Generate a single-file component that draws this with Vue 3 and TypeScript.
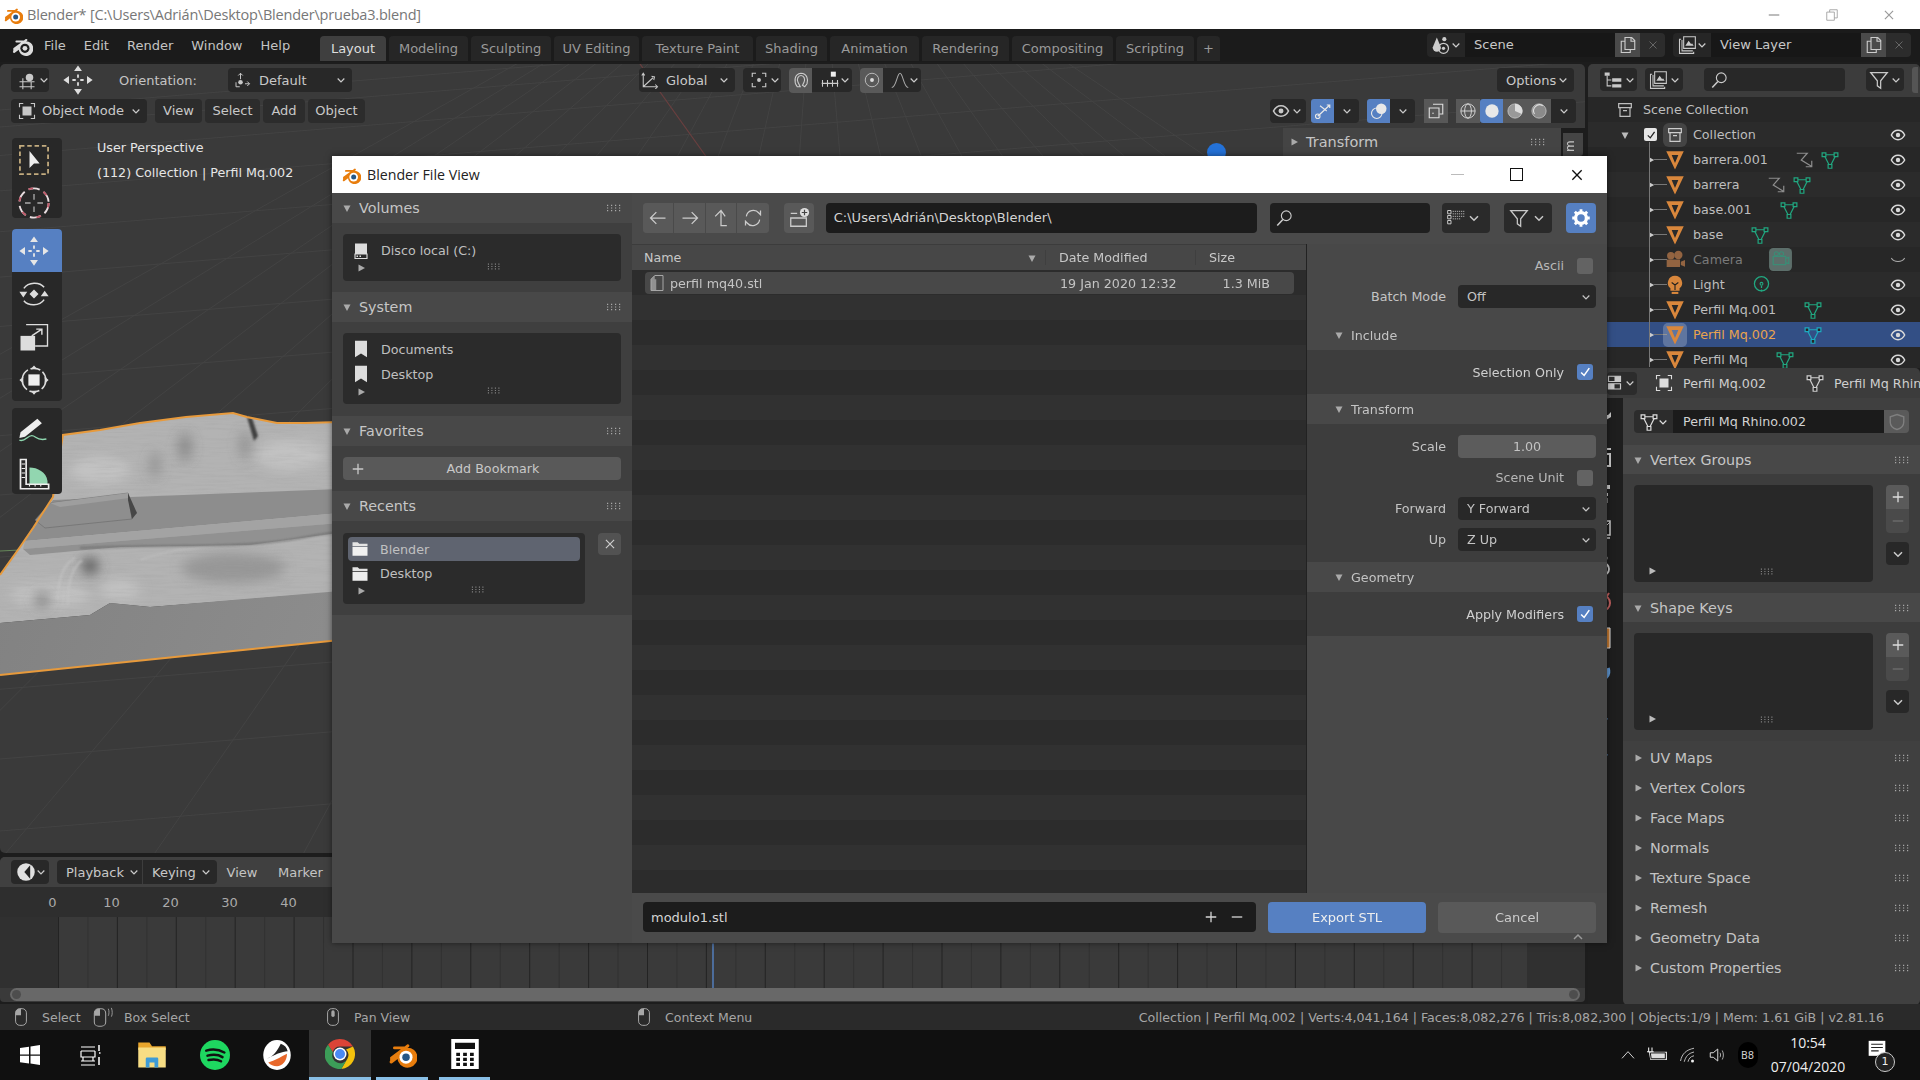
<script setup lang="ts">
const menus = ['File', 'Edit', 'Render', 'Window', 'Help']
const tabs = [
  { n: 'Layout', w: 66 }, { n: 'Modeling', w: 79 }, { n: 'Sculpting', w: 80 }, { n: 'UV Editing', w: 85 },
  { n: 'Texture Paint', w: 111 }, { n: 'Shading', w: 71 }, { n: 'Animation', w: 89 }, { n: 'Rendering', w: 87 },
  { n: 'Compositing', w: 101 }, { n: 'Scripting', w: 78 }, { n: '+', w: 23 },
]
const vpMenus = [{ n: 'View', w: 47 }, { n: 'Select', w: 55 }, { n: 'Add', w: 42 }, { n: 'Object', w: 57 }]
const tools = [
  [{ i: 'select' }, { i: 'cursor' }],
  [{ i: 'move', a: true }, { i: 'rotate' }, { i: 'scale' }, { i: 'transform' }],
  [{ i: 'annotate' }, { i: 'measure' }],
]
type Row = { n: string; ic: string; mod?: boolean; data: string; size: number; dim?: boolean; sel?: boolean }
const rows: Row[] = [
  { n: 'barrera.001', ic: 'meshobj', mod: true, data: 'meshdata', size: 18 },
  { n: 'barrera', ic: 'meshobj', mod: true, data: 'meshdata', size: 18 },
  { n: 'base.001', ic: 'meshobj', data: 'meshdata', size: 18 },
  { n: 'base', ic: 'meshobj', data: 'meshdata', size: 18 },
  { n: 'Camera', ic: 'camera', data: 'camdata', size: 25, dim: true },
  { n: 'Light', ic: 'light', data: 'lightdata', size: 17 },
  { n: 'Perfil Mq.001', ic: 'meshobj', data: 'meshdata', size: 18 },
  { n: 'Perfil Mq.002', ic: 'meshobj', data: 'meshdata', size: 18, sel: true },
  { n: 'Perfil Mq', ic: 'meshobj', data: 'meshdata', size: 18 },
]
const propTabs = [
  { i: 'wrench', c: '#c9c9c9' }, { i: 'partic', c: '#c9c9c9' }, { i: 'phys', c: '#c9c9c9' }, { i: 'constr', c: '#c9c9c9' },
  { i: 'dotc', c: '#c9c9c9' }, { i: 'clock', c: '#c0605f' }, { i: 'obox', c: '#d98a3a' }, { i: 'arc', c: '#5f95cf' },
  { i: 'blob', c: '#5f95cf' }, { i: 'blob', c: '#5f95cf' },
]
const closedPanels = ['UV Maps', 'Vertex Colors', 'Face Maps', 'Normals', 'Texture Space', 'Remesh', 'Geometry Data', 'Custom Properties']
const stripes = Array.from({ length: 25 }, (_, i) => i)
const frames = [0, 10, 20, 30, 40]
const ticks = Array.from({ length: 50 }, (_, i) => 58.5 + i * 29.45)
const gridLong = Array.from({ length: 22 }, (_, i) => ({ x1: -900 + i * 150, y1: 860, x2: 520 + i * 26, y2: 62 }))
const gridFlat = Array.from({ length: 26 }, (_, i) => {
  const y = 110 + Math.pow(i, 1.42) * 17
  return { x1: 0, y1: y, x2: 1585, y2: y - 130 }
})
const topEdge = '0,575 20,547 33,528 53,497 57,470 63,435 100,430 140,423 186,417 233,413 247,417 277,423 305,423 340,422'
const surface = topEdge + ' 340,592 150,607 110,603 90,615 0,623'
</script>

<template>
  <div class="root">
    <svg class="sprite" aria-hidden="true">
      <defs>
        <filter id="noise" x="0" y="0" width="100%" height="100%">
          <feTurbulence type="fractalNoise" baseFrequency="0.03 0.45" numOctaves="3" seed="4" />
          <feColorMatrix values="0 0 0 0 0.3  0 0 0 0 0.3  0 0 0 0 0.3  1.6 0 0 0 -0.62" />
          <feComposite in2="SourceGraphic" operator="in" />
        </filter>
        <filter id="b6"><feGaussianBlur stdDeviation="6" /></filter>
        <filter id="b3"><feGaussianBlur stdDeviation="3" /></filter>
        <filter id="b1"><feGaussianBlur stdDeviation="1.2" /></filter>
        <linearGradient id="frontg" x1="0" y1="0" x2="1" y2="0.1">
          <stop offset="0" stop-color="#828282" /><stop offset="1" stop-color="#8c8c8c" />
        </linearGradient>
      </defs>
      <symbol id="blender" viewBox="0 0 24 24">
        <path d="M1 15.5 9.6 9.2H4.4a1.1 1.1 0 0 1 0-2.2h8.2l2-1.6a1.2 1.2 0 0 1 1.500 1.800L14.900 7.900a8 8 0 1 1-7.300 11.300 7 7 0 0 1-.6-2.200l-4.400 3.300c-1.600 .9-2.600-.8-1.600-1.900Z" fill="#e87d0d" transform="translate(1.500 -1)" />
        <circle cx="15.200" cy="14.500" r="5.200" fill="#fff" />
        <circle cx="15.200" cy="14.500" r="3" fill="#265787" />
      </symbol>
      <symbol id="blenderw" viewBox="0 0 24 24">
        <path d="M1 15.5 9.6 9.2H4.4a1.1 1.1 0 0 1 0-2.2h8.2l2-1.6a1.2 1.2 0 0 1 1.500 1.800L14.900 7.900a8 8 0 1 1-7.300 11.300 7 7 0 0 1-.6-2.200l-4.400 3.300c-1.600 .9-2.600-.8-1.600-1.900Z" fill="currentColor" transform="translate(1.500 -1)" />
        <circle cx="15.200" cy="14.500" r="5" fill="#1d1d1d" />
        <circle cx="15.200" cy="14.500" r="2.600" fill="currentColor" />
      </symbol>
      <symbol id="chev" viewBox="0 0 12 12"><path d="M2 4.200 6 8.200 10 4.200" fill="none" stroke="currentColor" stroke-width="1.500" /></symbol>
      <symbol id="chevu" viewBox="0 0 12 12"><path d="M2 8 6 4 10 8" fill="none" stroke="currentColor" stroke-width="1.500" /></symbol>
      <symbol id="tri-d" viewBox="0 0 10 10"><path d="M1.500 2.500h7L5 9Z" fill="currentColor" /></symbol>
      <symbol id="tri-r" viewBox="0 0 10 10"><path d="M2.500 1.500v7L9 5Z" fill="currentColor" /></symbol>
      <symbol id="grip" viewBox="0 0 16 8"><path d="M1 .7h1.200v1.200H1zM5 .7h1.200v1.200H5zM9 .7h1.200v1.200H9zM13 .7h1.200v1.200H13zM1 3.400h1.200v1.200H1zM5 3.400h1.200v1.200H5zM9 3.400h1.200v1.200H9zM13 3.400h1.200v1.200H13zM1 6.100h1.200v1.200H1zM5 6.100h1.200v1.200H5zM9 6.100h1.200v1.200H9zM13 6.100h1.200v1.200H13z" fill="currentColor" /></symbol>
      <symbol id="meshobj" viewBox="0 0 24 24"><path d="M1.500 1.500h21L12 23.500Z M8 6l4 9.500L16 6Z" fill="#d9873c" fill-rule="evenodd" /></symbol>
      <symbol id="meshdata" viewBox="0 0 24 24"><path d="M4 5 12 21 20 5Z" fill="none" stroke="currentColor" stroke-width="1.600" /><path d="M1.500 2.500h5v5h-5zM17.500 2.500h5v5h-5zM9.500 18h5v5h-5z" fill="#262626" stroke="currentColor" stroke-width="1.600" /></symbol>
      <symbol id="camera" viewBox="0 0 24 24"><circle cx="7" cy="7" r="4.500" fill="#b8794a" /><circle cx="16" cy="6" r="5" fill="#b8794a" /><path d="M2 11.500h16v9H2zM19 14l5-2v8l-5-2z" fill="#b8794a" /></symbol>
      <symbol id="camdata" viewBox="0 0 24 24"><rect x="1" y="1" width="22" height="22" rx="4" fill="#5c6e6a" /><path d="M5 9h12v8H5zM17 11l3-1v6l-3-1" fill="none" stroke="#3b8c76" stroke-width="1.200" /><circle cx="8" cy="6.500" r="2" fill="none" stroke="#3b8c76" /><circle cx="13" cy="6.500" r="2" fill="none" stroke="#3b8c76" /></symbol>
      <symbol id="light" viewBox="0 0 24 24"><path d="M12 1a8.500 8.500 0 0 1 5.500 15v3h-11v-3A8.500 8.500 0 0 1 12 1Z" fill="#d9873c" /><path d="M8 21.500h8" stroke="#d9873c" stroke-width="2.500" /><path d="M8 9l4 3 4-3M12 12v6" fill="none" stroke="#20201f" stroke-width="1.300" /></symbol>
      <symbol id="lightdata" viewBox="0 0 24 24"><circle cx="12" cy="11" r="10" fill="none" stroke="currentColor" stroke-width="1.800" /><circle cx="12" cy="11" r="2" fill="none" stroke="currentColor" stroke-width="1.500" /><path d="M12 14v9" stroke="currentColor" stroke-width="1.800" stroke-dasharray="3 2" /></symbol>
      <symbol id="mod" viewBox="0 0 24 24"><path d="M1 3H15L7 12 20 20M21 13V21H13" fill="none" stroke="currentColor" stroke-width="1.600" /></symbol>
      <symbol id="eye" viewBox="0 0 24 24"><path d="M2 12C5 6 9 5 12 5s7 1 10 7c-3 6-7 7-10 7s-7-1-10-7Z" fill="none" stroke="currentColor" stroke-width="2.200" /><circle cx="12" cy="12" r="3.300" fill="currentColor" /></symbol>
      <symbol id="eyeoff" viewBox="0 0 24 24"><path d="M2 9c4 7 16 7 20 0" fill="none" stroke="currentColor" stroke-width="1.600" /></symbol>
      <symbol id="coll" viewBox="0 0 24 24"><path d="M2.500 2.500h19v6h-19zM4.500 8.500v13h15v-13M9 13h6" fill="none" stroke="currentColor" stroke-width="1.800" /></symbol>
      <symbol id="select" viewBox="0 0 32 32"><rect x="3.500" y="3.500" width="25" height="25" fill="none" stroke="#c2ab7e" stroke-width="1.600" stroke-dasharray="4 2.500" /><path d="M12 8v15l4-4 5 0Z" fill="#eee" /></symbol>
      <symbol id="cursor" viewBox="0 0 32 32"><circle cx="16" cy="16" r="13" fill="none" stroke="#e8dde0" stroke-width="1.700" stroke-dasharray="10 4" /><circle cx="16" cy="16" r="13" fill="none" stroke="#c25a6a" stroke-width="1.700" stroke-dasharray="4 10" /><path d="M16 8v5M16 19v5M8 16h5M19 16h5" stroke="#aaa" stroke-width="1.200" /></symbol>
      <symbol id="move" viewBox="0 0 32 32"><path d="M16 3l3.500 5h-7ZM16 29l3.500-5h-7ZM3 16l5-3.500v7ZM29 16l-5-3.500v7Z" fill="currentColor" /><path d="M16 11v3M16 18v3M11 16h3M18 16h3" stroke="currentColor" stroke-width="1.600" /></symbol>
      <symbol id="rotate" viewBox="0 0 32 32"><path d="M7 11C11 5 21 5 25 10M25 21c-4 6-14 6-18 1" fill="none" stroke="#ddd" stroke-width="1.300" /><path d="M16 12l4 4-4 4-4-4ZM3 14h7l-3.500 5ZM29 18h-7l3.500-5Z" fill="#ddd" /></symbol>
      <symbol id="scale" viewBox="0 0 32 32"><path d="M9 5h19v19H17" fill="none" stroke="#ddd" stroke-width="1.200" /><path d="M4 15h13v13H4z" fill="#ddd" /><path d="M14 15 23 9M18 9h5v5" fill="none" stroke="#ddd" stroke-width="1.300" /></symbol>
      <symbol id="transform" viewBox="0 0 32 32"><circle cx="16" cy="16" r="10.500" fill="none" stroke="#ddd" stroke-width="1.400" stroke-dasharray="9 2.500" /><path d="M11 11h10v10H11z" fill="#eee" /><path d="M16 3l3 3.500h-6zM16 29l3-3.500h-6zM3 16l3.500-3v6zM29 16l-3.500-3v6z" fill="#ddd" /></symbol>
      <symbol id="annotate" viewBox="0 0 32 32"><path d="M4 18 19 6l4 4L8 22l-5 1Z" fill="#eee" /><path d="M3 25c5 2 7-4 11-4s4 5 13 3" fill="none" stroke="#8fd8b0" stroke-width="1.300" /></symbol>
      <symbol id="measure" viewBox="0 0 32 32"><path d="M9 26h19v-3C27 15 19 11 12 11v15Z" fill="#92d6b0" /><path d="M4 4h5v22h20v4H4Z" fill="none" stroke="#eee" stroke-width="1.500" /><path d="M5 8h3M5 12h3M5 16h3M5 20h3M12 28v-2M17 28v-2M22 28v-2" stroke="#eee" /></symbol>
      <symbol id="gizmo" viewBox="0 0 24 24"><circle cx="15" cy="9" r="4.500" fill="currentColor" /><path d="M3 14h18M3 20h18M7 10v13M17 14v9" fill="none" stroke="currentColor" stroke-width="1.300" /></symbol>
      <symbol id="orient" viewBox="0 0 24 24"><path d="M10 3v8M7 6l3-3 3 3M4 15v6h5M16 17h6M19 14l3 3-3 3" fill="none" stroke="currentColor" stroke-width="1.300" /><circle cx="10" cy="15" r="3" fill="currentColor" /></symbol>
      <symbol id="global" viewBox="0 0 24 24"><path d="M3 3v18h18M3 21 16 9M1 6l2-3 2 3M19 18l3 3-3 3M14 7l4 1-1 4" fill="none" stroke="currentColor" stroke-width="1.400" /></symbol>
      <symbol id="pivot" viewBox="0 0 24 24"><path d="M8 3H3v5M16 3h5v5M8 21H3v-5M16 21h5v-5" fill="none" stroke="currentColor" stroke-width="1.500" /><circle cx="12" cy="12" r="2.600" fill="currentColor" /></symbol>
      <symbol id="magnet" viewBox="0 0 24 24"><path d="M7 21C2 14 3 4 12 3c8 0 10 9 8 14l-3 4-3-2 2-4c2-4 0-9-4-9s-6 5-4 9l3 6Z" fill="none" stroke="#ccc" stroke-width="1.500" /></symbol>
      <symbol id="snap" viewBox="0 0 24 24"><rect x="13" y="2" width="6" height="6" fill="#eee" /><path d="M2 16h20M3 12v8M9 12v8M15 12v8M21 12v8" fill="none" stroke="#ccc" stroke-width="1.300" /></symbol>
      <symbol id="prop" viewBox="0 0 24 24"><circle cx="12" cy="12" r="9" fill="none" stroke="#bbb" stroke-width="1.300" /><circle cx="12" cy="12" r="2.600" fill="#ddd" /></symbol>
      <symbol id="curve" viewBox="0 0 24 24"><path d="M1 22C7 22 8 3 12 3s5 19 11 19" fill="none" stroke="#aaa" stroke-width="1.400" /></symbol>
      <symbol id="objmode" viewBox="0 0 24 24"><path d="M7 2H2v5M17 2h5v5M7 22H2v-5M17 22h5v-5" fill="none" stroke="currentColor" stroke-width="1.500" /><rect x="6" y="6" width="12" height="12" fill="currentColor" /></symbol>
      <symbol id="copy" viewBox="0 0 24 24"><path d="M8 2h9l4 4v12H8ZM16 2v5h5M8 7H3v15h12v-4" fill="none" stroke="currentColor" stroke-width="1.500" /></symbol>
      <symbol id="wrestore" viewBox="0 0 24 24"><path d="M8 7V3h13v14h-5M3 7h13v14H3Z" fill="none" stroke="currentColor" stroke-width="1.400" /></symbol>
      <symbol id="x" viewBox="0 0 24 24"><path d="M5 5 19 19M19 5 5 19" fill="none" stroke="currentColor" stroke-width="2" /></symbol>
      <symbol id="scene" viewBox="0 0 24 24"><path d="M7 3 2 15a5 5 0 0 0 10 0Z" fill="currentColor" /><circle cx="16" cy="5" r="2.500" fill="currentColor" /><circle cx="15" cy="16" r="6" fill="none" stroke="currentColor" stroke-width="1.500" /><circle cx="15" cy="16" r="2" fill="currentColor" /></symbol>
      <symbol id="vlayer" viewBox="0 0 24 24"><path d="M8 2h14v14H8zM5 5H3v17h17v-2M6 6v13h13" fill="none" stroke="currentColor" stroke-width="1.300" /><path d="M10 13l4-6 3 4 1-1 2 3Z" fill="currentColor" /></symbol>
      <symbol id="outl" viewBox="0 0 24 24"><path d="M2 3h6v4H2zM11 10h11v4H11zM11 17h11v4H11z" fill="currentColor" /><path d="M5 7v12h5M5 12h5" fill="none" stroke="currentColor" stroke-width="1.300" /></symbol>
      <symbol id="search" viewBox="0 0 24 24"><circle cx="15" cy="9" r="6.500" fill="none" stroke="currentColor" stroke-width="1.500" /><path d="M10.500 14 3 22" stroke="currentColor" stroke-width="2" /></symbol>
      <symbol id="filter" viewBox="0 0 24 24"><path d="M2 3h20l-8 10v9l-4-3v-6Z" fill="none" stroke="currentColor" stroke-width="1.500" /></symbol>
      <symbol id="overlay1" viewBox="0 0 24 24"><path d="M17 4h4v4M21 4 5 19" fill="none" stroke="currentColor" stroke-width="1.600" /><circle cx="5" cy="19" r="3" fill="none" stroke="currentColor" stroke-width="1.500" /><path d="M8 5l9 7" stroke="currentColor" stroke-width="1.400" /></symbol>
      <symbol id="overlay2" viewBox="0 0 24 24"><circle cx="9" cy="15" r="7" fill="none" stroke="currentColor" stroke-width="1.500" /><circle cx="15" cy="9" r="7" fill="currentColor" /></symbol>
      <symbol id="xray" viewBox="0 0 24 24"><path d="M8 3h13v13h-4M3 8h13v13H3z" fill="none" stroke="currentColor" stroke-width="1.500" /><circle cx="8" cy="15" r="1" fill="currentColor" /></symbol>
      <symbol id="wire" viewBox="0 0 24 24"><circle cx="12" cy="12" r="9.500" fill="none" stroke="currentColor" stroke-width="1.200" /><ellipse cx="12" cy="12" rx="4.500" ry="9.500" fill="none" stroke="currentColor" stroke-width="1.200" /><path d="M2.500 12h19" stroke="currentColor" stroke-width="1.200" /></symbol>
      <symbol id="solid" viewBox="0 0 24 24"><circle cx="12" cy="12" r="10" fill="currentColor" /></symbol>
      <symbol id="matprev" viewBox="0 0 24 24"><circle cx="12" cy="12" r="9.500" fill="#999" stroke="#ccc" stroke-width="1" /><path d="M12 12V2.500A9.500 9.500 0 0 1 21 16Z" fill="#ddd" /></symbol>
      <symbol id="rendered" viewBox="0 0 24 24"><circle cx="12" cy="12" r="9.500" fill="#8a8a8a" stroke="#ccc" stroke-width="1" /><path d="M6 16A8 8 0 0 1 17 5" fill="none" stroke="#ddd" stroke-width="1.500" /></symbol>
      <symbol id="mouse" viewBox="0 0 16 24"><rect x="1.500" y="2" width="13" height="20" rx="5" fill="none" stroke="currentColor" stroke-width="1.200" /><path d="M8 2H6.500A5 5 0 0 0 1.500 7v3H8Z" fill="currentColor" /></symbol>
      <symbol id="mousedrag" viewBox="0 0 24 24"><rect x="1.500" y="2" width="13" height="20" rx="5" fill="none" stroke="currentColor" stroke-width="1.200" /><path d="M8 2H6.500A5 5 0 0 0 1.500 7v3H8Z" fill="currentColor" /><path d="M17.500 2c1 2 1 6 0 8M21 1c1.300 3 1.300 8 0 10" fill="none" stroke="currentColor" /></symbol>
      <symbol id="mousem" viewBox="0 0 16 24"><rect x="1.500" y="2" width="13" height="20" rx="5" fill="none" stroke="currentColor" stroke-width="1.200" /><rect x="6" y="4" width="4" height="8" rx="2" fill="currentColor" /></symbol>
      <symbol id="disk" viewBox="0 0 20 24"><path d="M2 2h16v14H2z" fill="#ddd" /><path d="M2 16h16v6H2Z" fill="none" stroke="#ddd" stroke-width="1.500" /><path d="M4 18h2v2H4zM8 18h2v2H8z" fill="#ddd" /></symbol>
      <symbol id="bookmark" viewBox="0 0 20 24"><path d="M2 1h16v22l-8-5-8 5Z" fill="#ddd" /></symbol>
      <symbol id="folder" viewBox="0 0 24 24"><path d="M2 3h7l2 2h11v3H2Z" fill="#e4e4e4" /><path d="M2 9h20v12H2Z" fill="#f0f0f0" /></symbol>
      <symbol id="plus" viewBox="0 0 16 16"><path d="M8 2v12M2 8h12" stroke="currentColor" stroke-width="1.500" /></symbol>
      <symbol id="minus" viewBox="0 0 16 16"><path d="M2 8h12" stroke="currentColor" stroke-width="1.500" /></symbol>
      <symbol id="back" viewBox="0 0 24 24"><path d="M21 12H3M10 5l-7 7 7 7" fill="none" stroke="currentColor" stroke-width="1.500" /></symbol>
      <symbol id="fwd" viewBox="0 0 24 24"><path d="M3 12h18M14 5l7 7-7 7" fill="none" stroke="currentColor" stroke-width="1.500" /></symbol>
      <symbol id="up" viewBox="0 0 24 24"><path d="M19 21H12V3M5 10l7-7 5 7" fill="none" stroke="currentColor" stroke-width="1.500" /></symbol>
      <symbol id="refresh" viewBox="0 0 24 24"><path d="M4 10A8.500 8.500 0 0 1 19 6l2 2V3M20 14A8.500 8.500 0 0 1 5 18l-2-2v5" fill="none" stroke="currentColor" stroke-width="1.500" /></symbol>
      <symbol id="newfolder" viewBox="0 0 24 24"><path d="M3 7h7M3 12h17v9H3Z" fill="none" stroke="currentColor" stroke-width="1.400" /><circle cx="18" cy="6" r="5" fill="#ddd" /><path d="M18 3v6M15 6h6" stroke="#444" stroke-width="1.300" /></symbol>
      <symbol id="viewlist" viewBox="0 0 24 24"><path d="M2 3h4v4H2zM2 9h4v4H2zM2 15h4v4H2z" fill="none" stroke="currentColor" stroke-width="1.200" /><path d="M8 4h14M8 7h14M8 10h14M8 13h10" stroke="currentColor" stroke-width="1" stroke-dasharray="1.500 1" /></symbol>
      <symbol id="gear" viewBox="0 0 24 24"><circle cx="12" cy="12" r="6.500" fill="none" stroke="currentColor" stroke-width="4" /><path d="M12 1.500V6M12 18v4.500M1.500 12H6M18 12h4.500M4.600 4.600l3 3M16.400 16.400l3 3M19.400 4.600l-3 3M7.600 16.400l-3 3" stroke="currentColor" stroke-width="3.400" /></symbol>
      <symbol id="file" viewBox="0 0 24 24"><path d="M9 2h11v20H4V7Z" fill="none" stroke="#aaa" stroke-width="1.300" /><path d="M9 2v5H4ZM4 7h7v15H4z" fill="#aaa" opacity=".75" /></symbol>
      <symbol id="shield" viewBox="0 0 24 24"><path d="M12 2 21 5v7c0 6-5 9-9 10-4-1-9-4-9-10V5Z" fill="none" stroke="#7f7f7f" stroke-width="1.800" /></symbol>
      <symbol id="timeline" viewBox="0 0 24 24"><circle cx="12" cy="12" r="10.500" fill="#e0e0e0" /><path d="M17 4 10 12l7 8" fill="#222" /></symbol>
      <symbol id="chk" viewBox="0 0 14 14"><path d="M2.500 7.500 6 11l6-8.500" fill="none" stroke="currentColor" stroke-width="1.800" /></symbol>
      <symbol id="wrench" viewBox="0 0 16 24"><path d="M2 2v5l5 3v12h3V10l5-3V2l-3 3H6Z" fill="currentColor" /></symbol>
      <symbol id="partic" viewBox="0 0 16 24"><path d="M2 3h5M10 3h5M3 8h11v12H3z" fill="none" stroke="currentColor" stroke-width="2" /></symbol>
      <symbol id="phys" viewBox="0 0 16 24"><path d="M1 3h13v4H6v4h6v3H1z" fill="currentColor" /><path d="M2 16h9v5H2z" fill="none" stroke="currentColor" /></symbol>
      <symbol id="proptab" viewBox="0 0 24 24"><path d="M2 3h16v7H2zM2 13h16v7H2z" fill="none" stroke="currentColor" stroke-width="1.600" /><path d="M10 3h8v7h-8zM2 13h8v7H2z" fill="currentColor" /></symbol>
      <symbol id="constr" viewBox="0 0 16 24"><path d="M2 3h12v14H2zM4 20h10" fill="none" stroke="currentColor" stroke-width="1.500" /><path d="M14 4 6 12" stroke="currentColor" /></symbol>
      <symbol id="dotc" viewBox="0 0 16 24"><circle cx="9" cy="4" r="2.500" fill="currentColor" /><circle cx="7" cy="15" r="6" fill="none" stroke="currentColor" stroke-width="1.800" /></symbol>
      <symbol id="clock" viewBox="0 0 16 24"><circle cx="6" cy="13" r="8" fill="none" stroke="currentColor" stroke-width="2" /><path d="M0 2 7 12l6-9" fill="none" stroke="currentColor" stroke-width="2" /></symbol>
      <symbol id="obox" viewBox="0 0 16 24"><path d="M1 2h13v20H1z" fill="#c77b32" stroke="#ddd" /></symbol>
      <symbol id="arc" viewBox="0 0 16 24"><path d="M2 18A9 9 0 0 0 12 6" fill="none" stroke="currentColor" stroke-width="3.500" /></symbol>
      <symbol id="blob" viewBox="0 0 16 24"><path d="M1 8h8M3 16l8 6" stroke="currentColor" stroke-width="3" /><circle cx="9" cy="12" r="2" fill="#ddd" /></symbol>
      <symbol id="win" viewBox="0 0 24 24"><path d="M2 5l9-1.300V11.500H2ZM12.500 3.500 22 2v9.500h-9.500ZM2 12.800h9v7.700L2 19.200ZM12.500 12.800H22V22l-9.500-1.400Z" fill="#fff" /></symbol>
      <symbol id="taskview" viewBox="0 0 24 24"><path d="M3 4h14M3 8h14M3 8v6h14V8M3 18h14M3 22h14M5 14v4M15 14v4" fill="none" stroke="#fff" stroke-width="1.200" /><path d="M21 2v6M21 10h1.500M21 14v8" stroke="#fff" stroke-width="1.500" /></symbol>
      <symbol id="explorer" viewBox="0 0 24 24"><path d="M1 2h9l2 3h11v3H1Z" fill="#e8a52c" /><path d="M1 6h22v16H1Z" fill="#f7dd84" /><path d="M7 22v-7a1 1 0 0 1 1-1h8a1 1 0 0 1 1 1v7h-3v-4h-4v4Z" fill="#3e9bd6" /></symbol>
      <symbol id="spotify" viewBox="0 0 24 24"><circle cx="12" cy="12" r="12" fill="#1ed760" /><path d="M5 8.500c5-1.500 10-1 14.500 1.500M6 12.500c4.500-1 9-.7 12 1.200M6.800 16c3.700-.8 7.500-.5 10 1" fill="none" stroke="#111" stroke-width="2" stroke-linecap="round" /></symbol>
      <symbol id="fusion" viewBox="0 0 24 24"><ellipse cx="12" cy="12" rx="11" ry="12" fill="#fff" /><path d="M4 15C9 13 12 9 15 3c3 1 5 3 5.500 6C16 9 10 12 4 15Z" fill="#222" /><path d="M5 18c6-2 11-5 15-7 0 6-4 10-8 10-3 0-5-1-7-3Z" fill="#e8682a" /></symbol>
      <symbol id="chrome" viewBox="0 0 24 24"><path d="M12 0a12 12 0 0 1 10.400 6H12a6 6 0 0 0-5.800 4.500L2.400 4.500A12 12 0 0 1 12 0Z" fill="#db4437" /><path d="M22.400 6A12 12 0 0 1 13 24l5-8.500A6 6 0 0 0 16.800 8.400Z" fill="#f4c20d" /><path d="M2.400 4.500A12 12 0 0 0 13 24l5-8.500a6 6 0 0 1-11.700-5Z" fill="#3c9d58" /><circle cx="12" cy="12" r="5.200" fill="#fff" /><circle cx="12" cy="12" r="4" fill="#4a8af4" /></symbol>
      <symbol id="calc" viewBox="0 0 24 24"><path d="M1 0h22v24H1ZM4 3v5h16V3ZM5 11h3v2.500H5zM10.500 11h3v2.500h-3zM16 11h3v2.500h-3zM5 15h3v2.500H5zM10.500 15h3v2.500h-3zM16 15h3v2.500h-3zM5 19h3v2.500H5zM10.500 19h3v2.500h-3zM16 19h3v2.500h-3z" fill="#fff" fill-rule="evenodd" /></symbol>
      <symbol id="tup" viewBox="0 0 24 24"><path d="M3 17 12 7l9 10" fill="none" stroke="#eee" stroke-width="1.300" /></symbol>
      <symbol id="batt" viewBox="0 0 24 24"><path d="M2 8h22v10H4z" fill="#ddd" /><path d="M4 9.500h18v7H5Z" fill="none" stroke="#111" stroke-width="1.200" /><path d="M2 3v5M6 3v5M0 8h8" stroke="#eee" stroke-width="1.300" /></symbol>
      <symbol id="wifi" viewBox="0 0 24 24"><path d="M2 20C4 10 10 5 20 3M7 21C9 14 12 10 20 8M12 21C13 17 15 14 20 13" fill="none" stroke="#bbb" stroke-width="1.300" /><circle cx="18" cy="20" r="2" fill="#eee" /></symbol>
      <symbol id="vol" viewBox="0 0 24 24"><path d="M3 9h4l6-5v16l-6-5H3Z" fill="none" stroke="#ddd" stroke-width="1.300" /><path d="M16 9c1 2 1 4 0 6M19 6c2 4 2 8 0 12" fill="none" stroke="#bbb" stroke-width="1.200" /></symbol>
      <symbol id="notif" viewBox="0 0 24 24"><path d="M2 1h20v18H2Z" fill="#fff" /><path d="M5 5h14M5 9h14M5 13h9" stroke="#222" stroke-width="1.300" /></symbol>
    </svg>

    <header class="titlebar">
      <svg class="s20 title-logo"><use href="#blender" /></svg>
      <span class="title-text">Blender* [C:\Users\Adrián\Desktop\Blender\prueba3.blend]</span>
      <div class="winctl">
        <svg class="s14 wgrey"><use href="#minus" /></svg>
        <svg class="s14 wgrey"><use href="#wrestore" /></svg>
        <svg class="s14 wgrey"><use href="#x" /></svg>
      </div>
    </header>

    <div class="topbar">
      <div class="menus">
        <svg class="s22 topbar-logo"><use href="#blenderw" /></svg>
        <span v-for="m in menus" :key="m">{{ m }}</span>
      </div>
      <nav class="tabs">
        <span v-for="t in tabs" :key="t.n" class="tab" :class="{ active: t.n === 'Layout' }" :style="{ width: t.w + 'px' }">{{ t.n }}</span>
      </nav>
      <div class="scene-group">
        <div class="idblock">
          <span class="idicon"><svg class="s20"><use href="#scene" /></svg><svg class="s10"><use href="#chev" /></svg></span>
          <span class="idname">Scene</span>
          <span class="idbtn"><svg class="s18"><use href="#copy" /></svg></span>
          <span class="idbtn off"><svg class="s12"><use href="#x" /></svg></span>
        </div>
        <div class="idblock">
          <span class="idicon"><svg class="s20"><use href="#vlayer" /></svg><svg class="s10"><use href="#chev" /></svg></span>
          <span class="idname">View Layer</span>
          <span class="idbtn"><svg class="s18"><use href="#copy" /></svg></span>
          <span class="idbtn off"><svg class="s12"><use href="#x" /></svg></span>
        </div>
      </div>
    </div>

    <main class="main">
      <div class="leftcol">
        <section class="viewport">
          <svg class="scene3d" viewBox="0 64 1585 789">
            <g stroke="#474747" stroke-width="1" opacity=".7">
              <line v-for="(l, i) in gridLong" :key="'a' + i" :x1="l.x1" :y1="l.y1" :x2="l.x2" :y2="l.y2" />
              <line v-for="(l, i) in gridFlat" :key="'b' + i" :x1="l.x1" :y1="l.y1" :x2="l.x2" :y2="l.y2" />
            </g>
            <line x1="640" y1="64" x2="720" y2="176" stroke="#6a3f3f" stroke-width="1.200" />
            <line x1="0" y1="551" x2="20" y2="550" stroke="#66885a" stroke-width="1.200" />
            <polygon :points="surface" fill="#b3b3b3" />
            <g filter="url(#b6)" fill="#c2c2c2">
              <ellipse cx="100" cy="470" rx="30" ry="14" />
              <ellipse cx="290" cy="455" rx="35" ry="15" />
              <ellipse cx="50" cy="595" rx="40" ry="12" />
              <ellipse cx="120" cy="590" rx="20" ry="10" />
            </g>
            <polygon :points="surface" fill="#fff" filter="url(#noise)" opacity=".22" />
            <polygon points="0,623 90,615 110,603 150,607 340,591 340,640 0,675" fill="url(#frontg)" />
            <g filter="url(#b6)">
              <ellipse cx="233" cy="568" rx="52" ry="15" fill="#8c8c8c" opacity=".7" />
              <ellipse cx="185" cy="447" rx="7" ry="14" fill="#6d6d6d" opacity=".55" />
              <ellipse cx="155" cy="465" rx="6" ry="14" fill="#6d6d6d" opacity=".4" />
              <ellipse cx="245" cy="445" rx="6" ry="14" fill="#777" opacity=".5" />
              <ellipse cx="90" cy="566" rx="9" ry="9" fill="#565656" opacity=".85" />
              <ellipse cx="42" cy="600" rx="8" ry="8" fill="#656565" opacity=".55" />
            </g>
            <g filter="url(#b1)" stroke="#c4c4c4" stroke-width="2.500" fill="none" opacity=".6">
              <path d="M58 600C58 580 62 565 75 558" />
              <path d="M68 605C68 585 70 570 82 560" />
              <path d="M140 560C180 545 240 545 300 535" stroke-width="1.500" />
            </g>
            <polygon points="53,500 340,489 340,513 25,541" fill="#8d8d8d" />
            <polygon points="25,541 340,513 340,523 23,549" fill="#a3a3a3" />
            <polygon points="23,549 340,523 338,533 250,545 120,547 30,555" fill="#919191" />
            <path d="M80 548C140 545 200 547 250 544S320 532 340 533" fill="none" stroke="#5c5c5c" stroke-width="1" filter="url(#b1)" />
            <polygon points="247,417 252,418 258,436 254,441" fill="#3f3f3f" filter="url(#b1)" />
            <polygon points="35,520 50,503 128,493 132,519 45,528" fill="#8e8e8e" stroke="#6a6a6a" stroke-width=".6" />
            <polygon points="50,503 128,493 129,498 60,507" fill="#9e9e9e" />
            <polygon points="128,493 137,513 132,519 128,500" fill="#474747" />
            <polyline :points="topEdge" fill="none" stroke="#e79a3c" stroke-width="2" />
            <line x1="0" y1="675" x2="340" y2="640" stroke="#e79a3c" stroke-width="2" />
          </svg>

          <div class="vhead toolrow">
            <span class="dd d-gizmo"><svg class="s20"><use href="#gizmo" /></svg><svg class="s10"><use href="#chev" /></svg></span>
            <svg class="s36 tool-move"><use href="#move" /></svg>
            <span class="orient-l">Orientation:</span>
            <span class="dd d-default"><svg class="s18"><use href="#orient" /></svg><span class="grow">Default</span><svg class="s10"><use href="#chev" /></svg></span>
            <span class="dd d-global"><svg class="s18"><use href="#global" /></svg><span class="grow">Global</span><svg class="s10"><use href="#chev" /></svg></span>
            <span class="dd d-pivot"><svg class="s18"><use href="#pivot" /></svg><svg class="s10"><use href="#chev" /></svg></span>
            <span class="togl t-mag"><svg class="s18"><use href="#magnet" /></svg></span>
            <span class="dd d-snap"><svg class="s20"><use href="#snap" /></svg><svg class="s10"><use href="#chev" /></svg></span>
            <span class="togl t-prop"><svg class="s18"><use href="#prop" /></svg></span>
            <span class="dd d-curve"><svg class="s18"><use href="#curve" /></svg><svg class="s10"><use href="#chev" /></svg></span>
            <span class="dd d-options"><span class="grow">Options</span><svg class="s10"><use href="#chev" /></svg></span>
          </div>
          <div class="vhead moderow">
            <span class="dd d-mode"><svg class="s18"><use href="#objmode" /></svg><span class="grow">Object Mode</span><svg class="s10"><use href="#chev" /></svg></span>
            <span v-for="m in vpMenus" :key="m.n" class="dd d-menu" :style="{ width: m.w + 'px' }">{{ m.n }}</span>
            <span class="dd d-eye"><svg class="s18"><use href="#eye" /></svg><svg class="s10"><use href="#chev" /></svg></span>
            <span class="blue-b"><svg class="s18"><use href="#overlay1" /></svg></span>
            <span class="dd d-sm"><svg class="s10"><use href="#chev" /></svg></span>
            <span class="blue-b ml8"><svg class="s18"><use href="#overlay2" /></svg></span>
            <span class="dd d-sm"><svg class="s10"><use href="#chev" /></svg></span>
            <span class="grey-b ml9"><svg class="s18"><use href="#xray" /></svg></span>
            <span class="grey-b ml8"><svg class="s18"><use href="#wire" /></svg></span>
            <span class="blue-b"><svg class="s16"><use href="#solid" /></svg></span>
            <span class="grey-b"><svg class="s18"><use href="#matprev" /></svg></span>
            <span class="grey-b"><svg class="s18"><use href="#rendered" /></svg></span>
            <span class="dd d-sm"><svg class="s10"><use href="#chev" /></svg></span>
          </div>

          <div class="toolbar">
            <div v-for="(g, gi) in tools" :key="gi" class="toolgroup">
              <span v-for="t in g" :key="t.i" class="toolbtn" :class="{ on: t.a }"><svg class="s36"><use :href="'#' + t.i" /></svg></span>
            </div>
          </div>
          <div class="vinfo">
            <div>User Perspective</div>
            <div>(112) Collection | Perfil Mq.002</div>
          </div>
          <div class="npanel">
            <svg class="s10 dimtri"><use href="#tri-r" /></svg>
            <span class="grow ntitle">Transform</span>
            <svg class="gr"><use href="#grip" /></svg>
            <span class="ntab"><span class="ntab-t">m</span></span>
          </div>
          <div class="zball"></div>
        </section>

        <section class="timeline">
          <div class="tl-head">
            <span class="dd d-tl"><svg class="s20"><use href="#timeline" /></svg><svg class="s10"><use href="#chev" /></svg></span>
            <span class="dd d-play">Playback<svg class="s10"><use href="#chev" /></svg></span>
            <span class="dd d-key">Keying<svg class="s10"><use href="#chev" /></svg></span>
            <span class="tl-menu m-view">View</span>
            <span class="tl-menu m-marker">Marker</span>
          </div>
          <div class="tl-ruler">
            <span v-for="f in frames" :key="f" class="frame">{{ f }}</span>
          </div>
          <div class="tl-track">
            <svg class="tl-lines" viewBox="0 0 1585 75" preserveAspectRatio="none">
              <rect x="0" y="0" width="58" height="75" fill="#303030" />
              <rect x="1527" y="0" width="58" height="75" fill="#303030" />
              <line v-for="(x, i) in ticks" :key="i" :x1="x" y1="0" :x2="x" y2="75" :stroke="i % 2 ? '#313131' : '#232323'" />
              <line x1="713" y1="28" x2="713" y2="75" stroke="#5a8fdc" stroke-width="1.200" />
            </svg>
          </div>
          <div class="tl-scroll"><span class="knob"></span><span class="knob"></span></div>
        </section>
      </div>

      <div class="rightcol">
        <section class="outliner">
          <div class="ol-head">
            <span class="dd d-ol"><svg class="s20"><use href="#outl" /></svg><svg class="s10"><use href="#chev" /></svg></span>
            <span class="dd d-ol2"><svg class="s20"><use href="#vlayer" /></svg><svg class="s10"><use href="#chev" /></svg></span>
            <span class="ol-search"><svg class="s18"><use href="#search" /></svg></span>
            <span class="dd d-ol3"><svg class="s20"><use href="#filter" /></svg><svg class="s10"><use href="#chev" /></svg></span>
            <span class="ol-edge"></span>
          </div>
          <div class="ol-list">
            <div class="ol-row r0">
              <svg class="s16"><use href="#coll" /></svg><span>Scene Collection</span>
            </div>
            <div class="ol-row r1">
              <svg class="s10 tridim"><use href="#tri-d" /></svg>
              <span class="ckb"><svg class="s10"><use href="#chk" /></svg></span>
              <span class="collbox"><svg class="s16"><use href="#coll" /></svg></span>
              <span class="grow">Collection</span>
              <svg class="s16 eye"><use href="#eye" /></svg>
            </div>
            <div v-for="r in rows" :key="r.n" class="ol-row r2" :class="{ sel: r.sel, dim: r.dim }">
              <span class="tree"><svg class="s8"><use href="#tri-r" /></svg><i class="tree-h"></i></span>
              <span class="obj" :class="{ objsel: r.sel }"><svg class="s20"><use :href="'#' + r.ic" /></svg></span>
              <span class="rname">{{ r.n }}</span>
              <svg v-if="r.mod" class="s18 modic"><use href="#mod" /></svg>
              <svg class="data" :class="r.sel ? 'cy' : 'gr-c'" :style="{ width: r.size + 'px', height: r.size + 'px' }"><use :href="'#' + r.data" /></svg>
              <span class="grow"></span>
              <svg class="s16 eye"><use :href="r.dim ? '#eyeoff' : '#eye'" /></svg>
            </div>
            <span class="treeline"></span>
          </div>
        </section>

        <section class="props">
          <div class="pr-head">
            <span class="dd d-pr"><svg class="s18"><use href="#proptab" /></svg><svg class="s10"><use href="#chev" /></svg></span>
            <svg class="s18 crumb1"><use href="#objmode" /></svg>
            <span class="crumbt">Perfil Mq.002</span>
            <svg class="s18 crumb2"><use href="#meshdata" /></svg>
            <span class="crumbt">Perfil Mq Rhin</span>
          </div>
          <div class="pr-body">
            <div class="pr-tabs">
              <svg v-for="(t, i) in propTabs" :key="i" class="ptab" :style="{ color: t.c }"><use :href="'#' + t.i" /></svg>
            </div>
            <div class="pr-content">
              <div class="meshrow">
                <span class="mesh-ic"><svg class="s18"><use href="#meshdata" /></svg><svg class="s10"><use href="#chev" /></svg></span>
                <span class="mesh-name">Perfil Mq Rhino.002</span>
                <span class="mesh-sh"><svg class="s18"><use href="#shield" /></svg></span>
              </div>
              <template v-for="p in ['Vertex Groups', 'Shape Keys']" :key="p">
                <div class="phead">
                  <svg class="s10 dimtri"><use href="#tri-d" /></svg><span class="grow">{{ p }}</span><svg class="gr"><use href="#grip" /></svg>
                </div>
                <div class="pbody">
                  <div class="uilist">
                    <div class="uifoot"><svg class="s10"><use href="#tri-r" /></svg><svg class="gr2"><use href="#grip" /></svg></div>
                  </div>
                  <div class="uibtns">
                    <span class="pm on"><svg class="s14"><use href="#plus" /></svg></span>
                    <span class="pm"><svg class="s14"><use href="#minus" /></svg></span>
                    <span class="pmv"><svg class="s12"><use href="#chev" /></svg></span>
                  </div>
                </div>
              </template>
              <div class="closedlist">
                <div v-for="p in closedPanels" :key="p" class="pclosed">
                  <svg class="s10 dimtri"><use href="#tri-r" /></svg><span class="grow">{{ p }}</span><svg class="gr"><use href="#grip" /></svg>
                </div>
              </div>
            </div>
          </div>
        </section>
      </div>
    </main>

    <footer class="statusbar">
      <span class="st st-a"><svg class="s18m"><use href="#mouse" /></svg>Select</span>
      <span class="st st-b"><svg class="s20h"><use href="#mousedrag" /></svg>Box Select</span>
      <span class="st st-c"><svg class="s18m"><use href="#mousem" /></svg>Pan View</span>
      <span class="st st-d"><svg class="s18m"><use href="#mouse" /></svg>Context Menu</span>
      <span class="st-r">Collection | Perfil Mq.002 | Verts:4,041,164 | Faces:8,082,276 | Tris:8,082,300 | Objects:1/9 | Mem: 1.61 GiB | v2.81.16</span>
    </footer>

    <div class="taskbar">
      <span class="tb tb-start"><svg class="s24"><use href="#win" /></svg></span>
      <span class="tb tb-view"><svg class="s24"><use href="#taskview" /></svg></span>
      <span class="tb tb-ex"><svg class="s30"><use href="#explorer" /></svg></span>
      <span class="tb tb-sp"><svg class="s30"><use href="#spotify" /></svg></span>
      <span class="tb tb-fu"><svg class="s30"><use href="#fusion" /></svg></span>
      <span class="tb tb-ch"><svg class="s30"><use href="#chrome" /></svg></span>
      <span class="tb tb-bl"><svg class="s30"><use href="#blender" /></svg></span>
      <span class="tb tb-ca"><svg class="s30"><use href="#calc" /></svg></span>
      <div class="tray">
        <svg class="s16"><use href="#tup" /></svg>
        <svg class="s20"><use href="#batt" /></svg>
        <svg class="s18"><use href="#wifi" /></svg>
        <svg class="s18"><use href="#vol" /></svg>
        <span class="badge">B8</span>
        <div class="clock"><div>10:54</div><div>07/04/2020</div></div>
        <span class="notif"><svg class="s20"><use href="#notif" /></svg><span class="nb">1</span></span>
      </div>
    </div>

    <div class="dialog">
      <div class="dlg-title">
        <svg class="s20"><use href="#blender" /></svg>
        <span class="grow dlg-t">Blender File View</span>
        <span class="dlg-min"></span>
        <span class="dlg-max"></span>
        <svg class="s16 dlg-x"><use href="#x" /></svg>
      </div>
      <div class="dlg-body">
        <aside class="dlg-left">
          <div class="phead h30">
            <svg class="s10 dimtri"><use href="#tri-d" /></svg><span class="grow">Volumes</span><svg class="gr"><use href="#grip" /></svg>
          </div>
          <div class="lsec">
            <div class="blist">
              <div class="bitem"><svg class="s18"><use href="#disk" /></svg>Disco local (C:)</div>
              <div class="bfoot"><svg class="s10"><use href="#tri-r" /></svg><svg class="gr2"><use href="#grip" /></svg></div>
            </div>
          </div>
          <div class="phead h30">
            <svg class="s10 dimtri"><use href="#tri-d" /></svg><span class="grow">System</span><svg class="gr"><use href="#grip" /></svg>
          </div>
          <div class="lsec pb12">
            <div class="blist">
              <div class="bitem"><svg class="s18"><use href="#bookmark" /></svg>Documents</div>
              <div class="bitem"><svg class="s18"><use href="#bookmark" /></svg>Desktop</div>
              <div class="bfoot"><svg class="s10"><use href="#tri-r" /></svg><svg class="gr2"><use href="#grip" /></svg></div>
            </div>
          </div>
          <div class="phead h30">
            <svg class="s10 dimtri"><use href="#tri-d" /></svg><span class="grow">Favorites</span><svg class="gr"><use href="#grip" /></svg>
          </div>
          <div class="lsec">
            <div class="addb"><svg class="s14"><use href="#plus" /></svg><span class="grow">Add Bookmark</span></div>
          </div>
          <div class="phead h30">
            <svg class="s10 dimtri"><use href="#tri-d" /></svg><span class="grow">Recents</span><svg class="gr"><use href="#grip" /></svg>
          </div>
          <div class="lsec recents">
            <div class="blist rlist">
              <div class="bitem rsel"><svg class="s18"><use href="#folder" /></svg>Blender</div>
              <div class="bitem"><svg class="s18"><use href="#folder" /></svg>Desktop</div>
              <div class="bfoot"><svg class="s10"><use href="#tri-r" /></svg><svg class="gr2"><use href="#grip" /></svg></div>
            </div>
            <span class="rx"><svg class="s14"><use href="#x" /></svg></span>
          </div>
        </aside>
        <div class="dlg-center">
          <div class="fb-top">
            <div class="navgroup">
              <span class="nb1"><svg class="s20"><use href="#back" /></svg></span>
              <span class="nb1"><svg class="s20"><use href="#fwd" /></svg></span>
              <span class="nb1"><svg class="s20"><use href="#up" /></svg></span>
              <span class="nb1"><svg class="s20"><use href="#refresh" /></svg></span>
            </div>
            <span class="nb1 nf"><svg class="s22"><use href="#newfolder" /></svg></span>
            <span class="path">C:\Users\Adrián\Desktop\Blender\</span>
            <span class="fsearch"><svg class="s18"><use href="#search" /></svg></span>
            <span class="dd d-view"><svg class="s20"><use href="#viewlist" /></svg><svg class="s12"><use href="#chev" /></svg></span>
            <span class="dd d-filt"><svg class="s20"><use href="#filter" /></svg><svg class="s12"><use href="#chev" /></svg></span>
            <span class="gearb"><svg class="s20"><use href="#gear" /></svg></span>
          </div>
          <div class="fb-mid">
            <div class="files">
              <div class="fhead">
                <span class="fh1">Name<svg class="s10 dimtri"><use href="#tri-d" /></svg></span>
                <span class="fh2">Date Modified</span>
                <span class="fh3">Size</span>
              </div>
              <div class="stripes">
                <div v-for="s in stripes" :key="s" class="stripe" :class="{ odd: s % 2 === 1 }">
                  <div v-if="s === 0" class="filerow">
                    <svg class="s18"><use href="#file" /></svg>
                    <span class="fname">perfil mq40.stl</span>
                    <span class="fdate">19 Jan 2020 12:32</span>
                    <span class="fsize">1.3 MiB</span>
                  </div>
                </div>
              </div>
            </div>
            <aside class="opts">
              <div class="optgrp first">
                <div class="oprow"><span class="oplab">Ascii</span><span class="chkbox"></span></div>
                <div class="oprow2"><span class="oplab2">Batch Mode</span><span class="ofield drop">Off<svg class="s10"><use href="#chev" /></svg></span></div>
              </div>
              <div class="ohead"><svg class="s10 dimtri"><use href="#tri-d" /></svg>Include</div>
              <div class="optgrp dark o1">
                <div class="oprow bright"><span class="oplab">Selection Only</span><span class="chkbox on"><svg class="s12"><use href="#chk" /></svg></span></div>
              </div>
              <div class="ohead"><svg class="s10 dimtri"><use href="#tri-d" /></svg>Transform</div>
              <div class="optgrp dark o2">
                <div class="oprow2"><span class="oplab2">Scale</span><span class="ofield num">1.00</span></div>
                <div class="oprow"><span class="oplab">Scene Unit</span><span class="chkbox"></span></div>
                <div class="oprow2"><span class="oplab2">Forward</span><span class="ofield drop">Y Forward<svg class="s10"><use href="#chev" /></svg></span></div>
                <div class="oprow2"><span class="oplab2">Up</span><span class="ofield drop">Z Up<svg class="s10"><use href="#chev" /></svg></span></div>
              </div>
              <div class="ohead"><svg class="s10 dimtri"><use href="#tri-d" /></svg>Geometry</div>
              <div class="optgrp dark o1">
                <div class="oprow bright"><span class="oplab">Apply Modifiers</span><span class="chkbox on"><svg class="s12"><use href="#chk" /></svg></span></div>
              </div>
            </aside>
          </div>
          <div class="fb-bot">
            <span class="fnamef"><span class="grow">modulo1.stl</span><svg class="s14"><use href="#plus" /></svg><svg class="s14"><use href="#minus" /></svg></span>
            <span class="okb">Export STL</span>
            <span class="cab">Cancel</span>
            <svg class="s12 upcar"><use href="#chevu" /></svg>
          </div>
        </div>
      </div>
    </div>
  </div>
</template>

<style>
html, body { margin: 0; background: #1d1d1d; }
</style>

<style scoped>
.root { position: relative; width: 1920px; height: 1080px; overflow: hidden; display: flex; flex-direction: column; background: #1d1d1d; font-family: "DejaVu Sans", sans-serif; font-size: 12.7px; color: #c4c4c4; }
.sprite { position: absolute; width: 0; height: 0; }
.grow { flex: 1; min-width: 0; }
svg { flex: none; display: block; }
.s8 { width: 8px; height: 8px; } .s10 { width: 10px; height: 10px; } .s12 { width: 12px; height: 12px; }
.s14 { width: 14px; height: 14px; } .s16 { width: 16px; height: 16px; } .s18 { width: 18px; height: 18px; }
.s20 { width: 20px; height: 20px; } .s22 { width: 22px; height: 22px; } .s24 { width: 24px; height: 24px; }
.s30 { width: 30px; height: 30px; } .s36 { width: 36px; height: 36px; } .s18m { width: 14px; height: 20px; }
.s20h { width: 21px; height: 21px; margin-right: -7px; }
.gr { width: 16px; height: 8px; color: #a9a9a9; }
.gr2 { width: 14px; height: 7px; color: #8a8a8a; }
.dimtri { color: #aaa; }

.titlebar { height: 29px; flex: none; background: #fff; display: flex; align-items: center; padding-left: 3px; }
.title-logo { margin-right: 4px; }
.title-text { font-family: "Open Sans", sans-serif; font-size: 14.500px; color: #777; letter-spacing: -0.2px; flex: 1; }
.winctl { display: flex; gap: 43.500px; margin-right: 24px; }
.wgrey { color: #999; }

.topbar { height: 33px; flex: none; display: flex; align-items: flex-start; background: #1b1b1b; font-size: 13px; }
.menus { width: 320px; flex: none; display: flex; align-items: center; height: 33px; gap: 18px; padding-left: 11px; box-sizing: border-box; }
.topbar-logo { color: #ddd; margin-right: -7px; }
.tabs { display: flex; gap: 3px; margin-top: 7px; }
.tab { height: 25px; display: flex; align-items: center; justify-content: center; background: #262626; color: #9a9a9a; border-radius: 4px 4px 0 0; padding-bottom: 1px; box-sizing: border-box; }
.tab.active { background: #3f3f3f; color: #ddd; }
.scene-group { margin-left: auto; display: flex; gap: 8px; margin-top: 4px; padding-right: 9px; }
.idblock { display: flex; height: 24px; }
.idicon { width: 38px; background: #262626; border-radius: 4px 0 0 4px; display: flex; align-items: center; justify-content: center; color: #ccc; }
.idname { width: 150px; background: #171717; padding-left: 9px; box-sizing: border-box; line-height: 24px; color: #c8c8c8; }
.idbtn { width: 25px; background: #4a4a4a; display: flex; align-items: center; justify-content: center; color: #ccc; }
.idbtn.off { background: #2c2c2c; color: #666; border-radius: 0 4px 4px 0; }

.main { flex: 1; display: grid; grid-template-columns: 1585px 335px; min-height: 0; }
.leftcol { display: flex; flex-direction: column; gap: 4px; padding-top: 2px; }
.viewport { position: relative; height: 789px; background: #3a3a3a; border-radius: 5px; overflow: hidden; }
.scene3d { position: absolute; inset: 0; width: 100%; height: 100%; }
.vhead { position: relative; display: flex; align-items: center; height: 30px; box-sizing: border-box; font-size: 13px; }
.toolrow { padding-left: 11px; margin-top: 1px; }
.moderow { padding-left: 11px; margin-top: 4px; height: 23px; }
.dd { display: flex; align-items: center; height: 24px; background: #282828; border-radius: 4px; box-sizing: border-box; color: #c8c8c8; gap: 2px; flex: none; }
.vhead .dd { height: 24px; }
.d-gizmo { width: 38px; padding-left: 6px; }
.tool-move { margin-left: 11px; color: #ddd; }
.orient-l { margin-left: 23px; width: 109px; }
.d-default { width: 124px; padding: 0 6px 0 5px; gap: 8px; }
.d-global { width: 96px; padding: 0 6px 0 2px; gap: 7px; margin-left: 287px; }
.d-pivot { width: 38px; margin-left: 8px; padding-left: 7px; }
.togl { width: 23px; height: 25px; background: #595959; display: flex; align-items: center; justify-content: center; border-radius: 4px 0 0 4px; margin-left: 8px; }
.d-snap { width: 40px; border-radius: 0 4px 4px 0; padding-left: 8px; gap: 0; }
.d-curve { width: 38px; border-radius: 0 4px 4px 0; padding-left: 8px; gap: 0; }
.d-options { width: 77px; margin-left: 576px; padding: 0 6px 0 9px; }
.d-mode { width: 136px; padding: 0 6px 0 7px; gap: 6px; margin-right: 5px; }
.d-menu { justify-content: center; margin-left: 3px; background: #2c2c2c; }
.d-eye { width: 36px; margin-left: 905px; padding-left: 2px; }
.blue-b { width: 23px; height: 24px; background: #5680c2; display: flex; align-items: center; justify-content: center; color: #e8e8e8; border-radius: 3px 0 0 3px; flex: none; }
.grey-b { width: 24px; height: 24px; background: #585858; display: flex; align-items: center; justify-content: center; color: #ddd; flex: none; }
.d-sm { width: 25px; border-radius: 0 4px 4px 0; justify-content: center; }
.d-eye + .blue-b { margin-left: 5px; }
.ml8 { margin-left: 8px; } .ml9 { margin-left: 9px; }

.toolbar { position: absolute; left: 12px; top: 74px; display: flex; flex-direction: column; }
.toolgroup { background: #282828; border-radius: 4px; width: 50px; margin-bottom: 7px; }
.toolgroup:first-child { height: 80px; margin-bottom: 11px; }
.toolbtn { display: flex; width: 50px; height: 43px; align-items: center; justify-content: center; box-sizing: border-box; padding-right: 6px; color: #e6e6e6; }
.toolbtn.on { background: #5680c2; border-radius: 4px 4px 0 0; }
.vinfo { position: absolute; left: 97px; top: 71px; color: #e6e6e6; line-height: 25px; font-size: 12.700px; }
.npanel { position: absolute; left: 1283px; top: 64px; width: 302px; height: 28px; background: #444; display: flex; align-items: center; padding-left: 6px; box-sizing: border-box; gap: 7px; }
.ntitle { font-size: 14.500px; }
.ntab { width: 24px; height: 28px; background: #1d1d1d; margin-left: 8px; display: flex; justify-content: center; padding-top: 5px; box-sizing: border-box; overflow: hidden; }
.ntab-t { background: #454545; width: 20px; height: 23px; flex: none; border-radius: 3px 0 0 0; writing-mode: vertical-rl; transform: rotate(180deg); font-size: 12px; text-align: left; padding: 4px 0 0 0; box-sizing: border-box; }
.zball { position: absolute; left: 1207px; top: 79px; width: 19px; height: 19px; border-radius: 50%; background: #2472d8; }

.timeline { height: 145px; background: #3a3a3a; border-radius: 5px 5px 4px 4px; display: flex; flex-direction: column; overflow: hidden; }
.tl-head { height: 30px; flex: none; display: flex; align-items: center; background: #404040; padding-left: 11px; font-size: 13px; }
.d-tl { width: 38px; padding-left: 5px; gap: 0; }
.d-play { width: 86px; margin-left: 8px; padding-left: 9px; border-radius: 4px 0 0 4px; gap: 5px; border-right: 1px solid #3d3d3d; }
.d-key { width: 74px; padding-left: 9px; border-radius: 0 4px 4px 0; gap: 5px; }
.tl-menu { width: 44px; text-align: center; }
.m-view { margin-left: 3px; }
.m-marker { margin-left: 14px; }
.tl-ruler { height: 30px; flex: none; background: #2e2e2e; display: flex; padding-left: 23px; align-items: center; color: #aaa; font-size: 13px; }
.frame { width: 59px; text-align: center; }
.tl-track { position: relative; flex: 1; background: #3a3a3a; }
.tl-lines { position: absolute; inset: 0; width: 100%; height: 100%; }
.tl-scroll { height: 13px; flex: none; background: #686868; margin: 0 5px 1px 10px; border-radius: 7px; display: flex; justify-content: space-between; align-items: center; padding: 0 2px; position: relative; }
.knob { width: 9px; height: 9px; border-radius: 50%; background: #4d4d4d; }

.rightcol { display: flex; flex-direction: column; padding-left: 3px; padding-top: 2px; height: 941px; }
.outliner { height: 304px; flex: none; background: #272727; border-radius: 5px 5px 0 0; overflow: hidden; display: flex; flex-direction: column; }
.ol-head { height: 33px; flex: none; background: #3c3c3c; display: flex; align-items: center; padding: 0 0 2px 12px; box-sizing: border-box; position: relative; }
.ol-head .dd { height: 23px; padding-left: 3px; }
.d-ol { width: 37px; } .d-ol2 { width: 38px; margin-left: 8px; }
.ol-search { width: 141px; height: 23px; background: #282828; margin-left: 21px; border-radius: 4px; display: flex; align-items: center; padding-left: 6px; box-sizing: border-box; color: #ccc; }
.d-ol3 { width: 38px; margin-left: 21px; }
.ol-edge { width: 6px; height: 26px; background: #555; margin-left: 8px; border-radius: 3px 0 0 3px; }
.ol-list { position: relative; flex: 1; }
.ol-row { position: relative; height: 25px; display: flex; align-items: center; color: #bebebe; box-sizing: border-box; }
.ol-row:nth-child(even) { background: #2b2b2b; }
.r0 { padding-left: 29px; gap: 10px; }
.r1 { padding-left: 32px; }
.ckb { width: 13px; height: 13px; background: #e6e6e6; border-radius: 2px; color: #222; margin-left: 14px; display: flex; align-items: center; justify-content: center; }
.collbox { width: 24px; height: 24px; background: #444; border-radius: 6px; display: flex; align-items: center; justify-content: center; margin-left: 6px; margin-right: 6px; color: #ccc; }
.tridim { color: #bbb; }
.eye { color: #d8d8d8; margin-right: 14px; }
.r2 { padding-left: 59px; }
.tree { position: relative; width: 20px; display: flex; align-items: center; color: #ccc; }
.tree-h { flex: 1; height: 1px; background: #777; margin-left: -1px; }
.obj { width: 24px; height: 24px; display: flex; align-items: center; justify-content: center; border-radius: 5px; margin-left: -4px; position: relative; }
.objsel { background: rgba(255, 255, 255, .22); }
.rname { margin-left: 6px; margin-right: 28px; }
.modic { color: #8d8d8d; margin-right: 7px; }
.gr-c { color: #21a881; }
.cy { color: #1eaac0; }
.dim { color: #7a7a7a; }
.dim .obj, .dim .eye { opacity: .75; }
.dim .data { margin-left: -3px; }
.sel { background: #334f85 !important; color: #e9a34f; }
.treeline { position: absolute; left: 61px; top: 45px; width: 1px; height: 225px; background: #777; }

.props { flex: 1; display: flex; flex-direction: column; background: #1e1e1e; min-height: 0; }
.pr-head { height: 30px; flex: none; background: #3c3c3c; display: flex; align-items: center; border-radius: 5px 5px 0 0; overflow: hidden; padding-left: 19px; white-space: nowrap; }
.d-pr { width: 30px; height: 23px; padding-left: 0; background: #2c2c2c; gap: 0; }
.crumb1 { margin-left: 18px; margin-right: 10px; color: #ddd; }
.crumbt { color: #cfcfcf; flex: none; }
.crumb2 { margin-left: 40px; margin-right: 10px; color: #cfcfcf; }
.pr-body { flex: 1; display: flex; min-height: 0; }
.pr-tabs { width: 35px; flex: none; background: #1e1e1e; display: flex; flex-direction: column; align-items: flex-end; padding-top: 12px; gap: 12px; padding-right: 11px; box-sizing: border-box; }
.ptab { width: 16px; height: 24px; }
.pr-content { flex: 1; background: #404040; border-radius: 0 0 5px 5px; padding-top: 12px; }
.meshrow { display: flex; margin: 0 11px 12px; height: 23px; }
.mesh-ic { width: 39px; background: #2c2c2c; border-radius: 4px 0 0 4px; display: flex; align-items: center; justify-content: center; color: #ddd; }
.mesh-name { flex: 1; background: #1b1b1b; padding-left: 10px; line-height: 23px; color: #d2d2d2; }
.mesh-sh { width: 25px; background: #5a5a5a; border-radius: 0 4px 4px 0; display: flex; align-items: center; justify-content: center; }
.phead { height: 29px; display: flex; align-items: center; background: #484848; padding: 0 10px 0 10px; gap: 7px; font-size: 14.300px; color: #c6c6c6; }
.h30 { height: 30px; }
.pbody { display: flex; padding: 11px; background: #3d3d3d; gap: 13px; height: 119px; box-sizing: border-box; }
.uilist { width: 239px; height: 97px; background: #282828; border-radius: 4px; display: flex; flex-direction: column; justify-content: flex-end; }
.uifoot { display: flex; align-items: center; padding: 0 0 6px 13px; color: #bbb; }
.uifoot .gr2 { margin-left: 103px; }
.uibtns { display: flex; flex-direction: column; }
.pm { width: 23px; height: 24px; background: #4a4a4a; display: flex; align-items: center; justify-content: center; color: #6e6e6e; }
.pm.on { background: #5a5a5a; color: #ddd; border-radius: 4px 4px 0 0; }
.pm:not(.on) { border-radius: 0 0 4px 4px; }
.pmv { width: 23px; height: 23px; background: #282828; margin-top: 9px; border-radius: 4px; display: flex; align-items: center; justify-content: center; color: #ccc; }
.closedlist { padding-top: 2px; }
.pclosed { height: 30px; display: flex; align-items: center; padding: 0 10px 0 10px; gap: 7px; font-size: 14.300px; color: #c4c4c4; }

.statusbar { height: 26px; flex: none; display: flex; align-items: center; background: #2a2a2a; color: #a6a6a6; font-size: 12.500px; }
.st { display: flex; align-items: center; gap: 14px; }
.st-a { margin-left: 14px; width: 79px; }
.st-b { width: 233px; gap: 17px; }
.st-c { width: 311px; gap: 14px; }
.st-r { margin-left: auto; margin-right: 36px; font-size: 12.620px; }

.taskbar { height: 50px; flex: none; background: #101010; display: flex; align-items: center; position: relative; }
.tb { height: 50px; display: flex; align-items: center; justify-content: center; box-sizing: border-box; flex: none; }
.tb-start { width: 60px; }
.tb-view { width: 60px; }
.tb-ex { width: 64px; } .tb-sp { width: 61px; } .tb-fu { width: 64px; }
.tb-ch { width: 62px; background: #333; border-bottom: 3px solid #89bfe6; }
.tb-bl { width: 52px; margin-left: 5px; border-bottom: 3px solid #89bfe6; }
.tb-ca { width: 51px; margin-left: 11px; border-bottom: 3px solid #89bfe6; }
.tray { margin-left: auto; display: flex; align-items: center; gap: 11.500px; padding-right: 29px; color: #eee; }
.badge { width: 20px; height: 26px; border-radius: 10px; background: #000; font-size: 10px; display: flex; align-items: center; justify-content: center; color: #ccc; }
.clock { font-family: "Open Sans", sans-serif; font-size: 14px; text-align: center; line-height: 24px; width: 82px; margin: 0 6.500px 0 -2px; }
.notif { position: relative; width: 24px; height: 30px; }
.nb { position: absolute; left: 8px; top: 12px; width: 18px; height: 18px; border-radius: 50%; border: 1px solid #ccc; background: #222; font-size: 11px; line-height: 18px; text-align: center; }

.dialog { position: absolute; left: 332px; top: 156px; width: 1275px; height: 787px; display: flex; flex-direction: column; background: #4a4a4a; box-shadow: 0 0 6px rgba(0, 0, 0, .5); }
.dlg-title { height: 37px; flex: none; background: #fff; display: flex; align-items: center; padding-left: 9px; gap: 6px; color: #222; font-family: "Open Sans", sans-serif; font-size: 14.200px; }
.dlg-min { width: 13px; height: 1px; background: #bbb; margin-right: 40px; }
.dlg-max { width: 11px; height: 11px; border: 1.500px solid #111; margin-right: 40px; }
.dlg-x { color: #111; margin-right: 22px; }
.dlg-body { flex: 1; display: flex; min-height: 0; }
.dlg-left { width: 300px; flex: none; background: #484848; }
.lsec { background: #3f3f3f; padding: 11px; }
.pb12 { padding-bottom: 12px; }
.blist { background: #2b2b2b; border-radius: 4px; padding-top: 4px; display: flex; flex-direction: column; }
.bitem { height: 25px; display: flex; align-items: center; gap: 11px; padding-left: 9px; color: #c0c0c0; }
.bfoot { height: 17.500px; display: flex; align-items: flex-start; padding-left: 13px; color: #aaa; }
.bfoot .gr2 { margin-left: 121px; }
.addb { height: 23px; background: #595959; border-radius: 4px; display: flex; align-items: center; padding-left: 8px; text-align: center; color: #c8c8c8; }
.recents { display: flex; gap: 13px; padding-top: 12px; }
.rlist { width: 242px; padding-top: 4px; }
.rlist .bfoot .gr2 { margin-left: 105px; }
.rsel { background: #5f6470; border-radius: 4px; margin: 0 5px; padding-left: 3px; height: 24px; }
.rlist .bitem:not(.rsel) { padding-left: 8px; }
.rx { width: 23px; height: 22px; background: #525252; border-radius: 4px; display: flex; align-items: center; justify-content: center; color: #cfcfcf; }
.dlg-center { flex: 1; display: flex; flex-direction: column; min-width: 0; }
.fb-top { height: 51px; flex: none; display: flex; align-items: center; padding: 0 11px 2px 11px; box-sizing: border-box; }
.navgroup { display: flex; background: #595959; border-radius: 4px; overflow: hidden; }
.nb1 { width: 31.500px; height: 30px; display: flex; align-items: center; justify-content: center; color: #ccc; border-right: 1px solid #4a4a4a; box-sizing: border-box; background: #595959; }
.nb1:last-child { border-right: 0; }
.nf { width: 30px; margin-left: 15px; border: 0; border-radius: 4px; }
.path { width: 432px; height: 30px; background: #1c1c1c; border-radius: 4px; margin-left: 12px; padding-left: 8px; line-height: 30px; box-sizing: border-box; color: #d4d4d4; font-size: 13px; }
.fsearch { width: 160px; height: 30px; background: #1f1f1f; border-radius: 4px; margin-left: 13px; display: flex; align-items: center; padding-left: 5px; box-sizing: border-box; color: #ccc; }
.d-view { width: 48px; height: 30px; margin-left: 12px; padding-left: 4px; gap: 2px; background: #2a2a2a; }
.d-filt { width: 48px; height: 30px; margin-left: 14px; padding-left: 5px; gap: 4px; background: #2a2a2a; }
.gearb { width: 30px; height: 30px; margin-left: 14px; background: #5680c2; border-radius: 4px; display: flex; align-items: center; justify-content: center; color: #fff; }
.fb-mid { flex: 1; display: flex; min-height: 0; }
.files { width: 675px; flex: none; display: flex; flex-direction: column; border-right: 1px solid #222; box-sizing: border-box; }
.fhead { height: 26px; flex: none; background: #474747; display: flex; align-items: center; border-top: 1px solid #3c3c3c; box-sizing: border-box; color: #c8c8c8; }
.fh1 { width: 414px; padding-left: 12px; box-sizing: border-box; display: flex; justify-content: space-between; padding-right: 8px; align-items: center; border-right: 1px solid #3f3f3f; }
.fh2 { width: 150px; padding-left: 13px; box-sizing: border-box; border-right: 1px solid #3f3f3f; }
.fh3 { padding-left: 13px; }
.stripes { flex: 1; overflow: hidden; background: #2c2c2c; }
.stripe { height: 25px; background: #2c2c2c; }
.stripe.odd { background: #313131; }
.filerow { margin: 0 12px 0 13px; height: 22px; position: relative; top: 2px; background: #484848; border-radius: 4px; display: flex; align-items: center; padding-left: 3px; color: #c4c4c4; }
.fname { margin-left: 4px; width: 390px; }
.fdate { width: 156px; }
.fsize { width: 54px; text-align: right; }
.opts { flex: 1; background: #484848; }
.optgrp { padding: 0 11px 0 0; display: flex; flex-direction: column; }
.first { height: 76px; padding-top: 10px; box-sizing: border-box; gap: 8px; }
.dark { background: #3d3d3d; }
.o1 { height: 44px; justify-content: center; }
.o2 { height: 138px; padding-top: 11px; box-sizing: border-box; gap: 8px; }
.oprow { display: flex; height: 23px; align-items: center; justify-content: flex-end; color: #b8b8b8; }
.bright { color: #d0d0d0; }
.oplab { margin-right: 13px; }
.chkbox { width: 16px; height: 16px; background: #636363; border-radius: 3px; margin-right: 3px; display: flex; align-items: center; justify-content: center; color: #fff; }
.chkbox.on { background: #5680c2; }
.oprow2 { display: flex; height: 23px; align-items: center; color: #c4c4c4; }
.oplab2 { width: 139px; text-align: right; margin-right: 12px; }
.ofield { width: 138px; height: 23px; border-radius: 4px; box-sizing: border-box; display: flex; align-items: center; }
.drop { background: #282828; padding: 0 5px 0 9px; justify-content: space-between; }
.num { background: #5c5c5c; justify-content: center; }
.ohead { height: 30px; display: flex; align-items: center; background: #484848; padding-left: 27px; gap: 7px; color: #c4c4c4; }
.fb-bot { position: relative; height: 50px; flex: none; display: flex; align-items: center; padding: 0 0 2px 11px; gap: 12px; box-sizing: border-box; }
.fnamef { width: 613px; height: 30px; background: #1c1c1c; border-radius: 4px; display: flex; align-items: center; padding: 0 12px 0 8px; box-sizing: border-box; gap: 12px; color: #d4d4d4; font-size: 13px; }
.okb, .cab { width: 158px; height: 31px; border-radius: 4px; display: flex; align-items: center; justify-content: center; font-size: 13px; }
.okb { background: #5680c2; color: #eee; }
.cab { background: #595959; color: #ccc; }
.upcar { position: absolute; right: 23px; bottom: 0; color: #999; }
</style>
